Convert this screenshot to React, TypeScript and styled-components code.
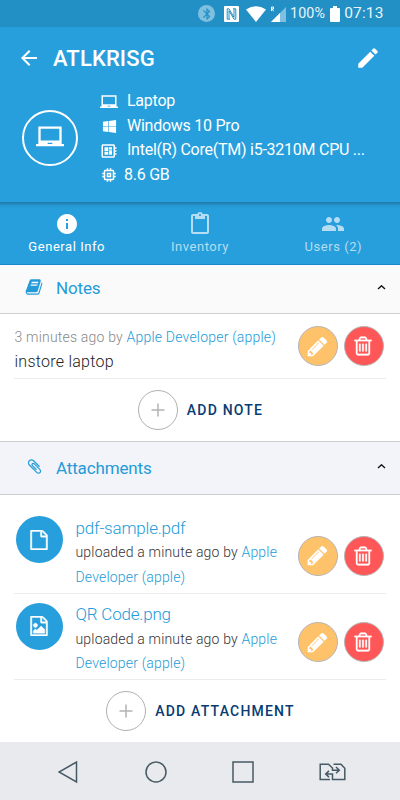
import React from "react";
import styled, { createGlobalStyle } from "styled-components";
import {
  MdArrowBack,
  MdEdit,
  MdLaptopChromebook,
  MdDeveloperBoard,
  MdMemory,
  MdInfo,
  MdContentPaste,
  MdPeople,
  MdBluetooth,
} from "react-icons/md";
import { FaWindows } from "react-icons/fa";

const GlobalStyle = createGlobalStyle`
  *, *::before, *::after { box-sizing: border-box; }
  body { margin: 0; font-family: Roboto, "Liberation Sans", sans-serif; background: #fff; }
  button { font: inherit; border: 0; padding: 0; background: none; }
  svg { display: block; flex: none; }
`;

const Screen = styled.div`
  width: 400px;
  height: 800px;
  display: flex;
  flex-direction: column;
  overflow: hidden;
  background: #fff;
`;

const StatusBar = styled.div`
  height: 27px;
  flex: none;
  display: flex;
  align-items: center;
  padding-left: 198px;
  background: #2390c5;
  color: #e6f4fb;
  font-size: 14px;
`;

const StatusItem = styled.span<{ $gap: number; $size?: number }>`
  margin-left: ${(p) => p.$gap}px;
  font-size: ${(p) => p.$size ?? 14}px;
  letter-spacing: 0.15px;
  line-height: 27px;
`;

const BluetoothBadge = styled.span`
  width: 17px;
  height: 17px;
  display: grid;
  place-items: center;
  border-radius: 50%;
  background: #7fbfe0;
  color: #2390c5;
`;

const Header = styled.header`
  height: 175px;
  flex: none;
  background: #269fdc;
  color: #fff;
`;

const TitleRow = styled.div`
  height: 62px;
  display: flex;
  align-items: center;
  padding: 0 19px 0 17px;
`;

const Title = styled.h1`
  margin: 0 auto 0 12px;
  font-size: 22px;
  font-weight: 500;
  letter-spacing: 0.12px;
`;

const Device = styled.div`
  display: flex;
  padding-left: 22px;
`;

const DeviceAvatar = styled.div`
  width: 56px;
  height: 56px;
  margin-top: 21px;
  padding-bottom: 2px;
  display: grid;
  place-items: center;
  border: 2px solid #fff;
  border-radius: 50%;
`;

const Specs = styled.ul`
  list-style: none;
  margin: -0.500px 0 0 22px;
  padding: 0;
`;

const Spec = styled.li<{ $gap?: number }>`
  height: 24.500px;
  display: flex;
  align-items: center;
  gap: ${(p) => p.$gap ?? 9}px;
  font-size: 16px;
  letter-spacing: -0.250px;
  white-space: nowrap;
`;

const SpecIcon = styled.span`
  width: 18px;
  display: grid;
  place-items: center;
  padding-top: 2px;
`;

const Tabs = styled.nav`
  height: 63px;
  flex: none;
  display: grid;
  grid-template-columns: repeat(3, 1fr);
  background: linear-gradient(#1d7aa9, #2389be 2px, #2599d4 4px, #269fdc 7px);
  border-bottom: 1px solid #168acb;
`;

const Tab = styled.button<{ $active?: boolean }>`
  display: flex;
  flex-direction: column;
  align-items: center;
  padding-top: 10px;
  gap: 1px;
  color: ${(p) => (p.$active ? "#fff" : "#b5ddf3")};
  font-size: 13px;
  line-height: 19px;
  letter-spacing: 0.55px;
`;

const SectionHeader = styled.div<{ $tinted?: boolean }>`
  height: ${(p) => (p.$tinted ? 54 : 49)}px;
  flex: none;
  display: flex;
  align-items: center;
  padding: 0 13px 0 25px;
  background: ${(p) => (p.$tinted ? "#f3f4f9" : "#fafafa")};
  border-top: ${(p) => (p.$tinted ? "1px solid #cfcfd2" : "0")};
  border-bottom: 1px solid #cfcfd2;
  color: #249bd8;
`;

const SectionIcon = styled.span`
  width: 18px;
  display: grid;
  place-items: center;
  margin-top: -4px;
`;

const SectionTitle = styled.h2<{ $lift: number }>`
  margin: -${(p) => p.$lift}px auto 0 13px;
  font-size: 17px;
  line-height: 24px;
  font-weight: 400;
  letter-spacing: -0.150px;
`;

const NoteRow = styled.div`
  height: 65px;
  flex: none;
  margin: 0 14px;
  display: flex;
  justify-content: space-between;
  border-bottom: 1px solid #ececec;
`;

const NoteText = styled.div`
  padding: 11px 0 0 0.500px;
  color: #888;
  font-size: 14px;
  line-height: 24px;
  font-weight: 300;
  letter-spacing: 0.2px;
  white-space: nowrap;
`;

const NoteBody = styled.div`
  padding-top: 1px;
  color: #222;
  font-size: 16px;
  letter-spacing: 0.25px;
`;

const Link = styled.span`
  color: #249bd8;
`;

const Actions = styled.div<{ $top: number }>`
  display: flex;
  gap: 6px;
  padding-top: ${(p) => p.$top}px;
  margin-right: 2px;
`;

const RoundButton = styled.button<{ $color: string }>`
  width: 40px;
  height: 40px;
  padding-right: 2px;
  display: grid;
  place-items: center;
  border: 1px solid #b5b5b5;
  border-radius: 50%;
  background: ${(p) => p.$color};
  color: #fff;
`;

const AddRow = styled.button<{ $height: number }>`
  height: ${(p) => p.$height}px;
  flex: none;
  display: flex;
  align-items: center;
  justify-content: center;
  gap: 9px;
  padding-left: 1px;
  color: #083c72;
  font-size: 14px;
  font-weight: 500;
  letter-spacing: 1.200px;
`;

const PlusCircle = styled.span`
  width: 40px;
  height: 40px;
  display: grid;
  place-items: center;
  border: 1px solid #b0b0b0;
  border-radius: 50%;
`;

const Attachments = styled.div`
  margin: 0 14px;
  padding-top: 12px;
  flex: none;
`;

const Attachment = styled.div`
  height: 86.500px;
  display: flex;
  border-bottom: 1px solid #ececec;
`;

const FileAvatar = styled.div`
  width: 47px;
  height: 47px;
  margin: 9px 13px 0 1.500px;
  display: grid;
  place-items: center;
  flex: none;
  border-radius: 50%;
  background: #269fdc;
  color: #fff;
`;

const FileInfo = styled.div`
  flex: 1;
  padding-top: 8.500px;
  color: #333;
  font-size: 14px;
  line-height: 24.500px;
  font-weight: 300;
  white-space: nowrap;
  letter-spacing: 0.180px;
`;

const FileName = styled.div`
  color: #249bd8;
  font-size: 17px;
  letter-spacing: -0.200px;
`;

const NavBar = styled.div`
  margin-top: auto;
  height: 58px;
  flex: none;
  display: flex;
  justify-content: space-between;
  align-items: center;
  padding: 1px 54px 0 58px;
  background: #e9eaee;
`;

const GLYPHS = {
  book: "M1703 478q40 57 18 129l-275 906q-19 64-76.5 107.5t-122.5 43.5h-923q-77 0-148.5-53.5t-99.5-131.5q-24-67-2-127 0-4 3-27t4-37q1-8-3-21.5t-3-19.5q2-11 8-21t16.5-23.5 16.5-23.5q23-38 45-91.5t30-91.5q3-10 .5-30t-.5-28q3-11 17-28t17-23q21-36 42-92t25-90q1-9-2.5-32t.5-28q4-13 22-30.5t22-22.5q19-26 42.5-84.5t27.5-96.5q1-8-3-25.5t-2-26.5q2-8 9-18t18-23 17-21q8-12 16.5-30.5t15-35 16-36 19.5-32 26.5-23.5 36-11.5 47.5 5.5l-1 3q38-9 51-9h761q74 0 114 56t18 130l-274 906q-36 119-71.5 153.5t-128.5 34.5h-869q-27 0-38 15-11 16-1 43 24 70 144 70h923q29 0 56-15.5t35-41.5l300-987q7-22 5-57 38 15 59 43zm-1064 2q-4 13 2 22.5t20 9.5h608q13 0 25.5-9.5t16.5-22.5l21-64q4-13-2-22.5t-20-9.5h-608q-13 0-25.5 9.5t-16.5 22.5zm-83 256q-4 13 2 22.5t20 9.5h608q13 0 25.5-9.5t16.5-22.5l21-64q4-13-2-22.5t-20-9.5h-608q-13 0-25.5 9.5t-16.5 22.5z",
  clip: "M1596 1385q0 117-79 196t-196 79q-135 0-235-100l-777-776q-113-115-113-271 0-159 110-270t269-111q158 0 273 113l605 606q10 10 10 22 0 16-30.5 46.5t-46.5 30.5q-13 0-23-10l-606-607q-79-77-181-77-106 0-179 75t-73 181q0 105 76 181l776 777q63 63 145 63 64 0 106-42t42-106q0-82-63-145l-581-581q-26-24-60-24-29 0-48 19t-19 48q0 32 25 59l410 410q10 10 10 22 0 16-31 47t-47 31q-12 0-22-10l-410-410q-63-61-63-149 0-82 57-139t139-57q88 0 149 63l581 581q100 98 100 235z",
  pencil: "M491 1536l91-91-235-235-91 91v107h128v128h107zm523-928q0-22-22-22-10 0-17 7l-542 542q-7 7-7 17 0 22 22 22 10 0 17-7l542-542q7-7 7-17zm-54-192l416 416-832 832h-416v-416zm683 96q0 53-37 90l-166 166-416-416 166-165q36-38 90-38 53 0 91 38l235 234q37 39 37 91z",
  trash: "M704 736v576q0 14-9 23t-23 9h-64q-14 0-23-9t-9-23v-576q0-14 9-23t23-9h64q14 0 23 9t9 23zm256 0v576q0 14-9 23t-23 9h-64q-14 0-23-9t-9-23v-576q0-14 9-23t23-9h64q14 0 23 9t9 23zm256 0v576q0 14-9 23t-23 9h-64q-14 0-23-9t-9-23v-576q0-14 9-23t23-9h64q14 0 23 9t9 23zm128 724v-948h-896v948q0 22 7 40.5t14.5 27 10.5 8.5h832q3 0 10.5-8.5t14.5-27 7-40.5zm-672-1076h448l-48-117q-7-9-17-11h-317q-10 2-17 11zm928 32v64q0 14-9 23t-23 9h-96v948q0 83-47 143.5t-113 60.5h-832q-66 0-113-58.5t-47-141.5v-952h-96q-14 0-23-9t-9-23v-64q0-14 9-23t23-9h309l70-167q15-37 54-63t79-26h320q40 0 79 26t54 63l70 167h309q14 0 23 9t9 23z",
  file: "M1596 380q28 28 48 76t20 88v1152q0 40-28 68t-68 28h-1344q-40 0-68-28t-28-68v-1600q0-40 28-68t68-28h896q40 0 88 20t76 48zm-444-244v376h376q-10-29-22-41l-313-313q-12-12-41-22zm384 1528v-1024h-416q-40 0-68-28t-28-68v-416h-768v1536h1280z",
  image:
    "M1596 380q28 28 48 76t20 88v1152q0 40-28 68t-68 28h-1344q-40 0-68-28t-28-68v-1600q0-40 28-68t68-28h896q40 0 88 20t76 48zm-444-244v376h376q-10-29-22-41l-313-313q-12-12-41-22zm384 1528v-1024h-416q-40 0-68-28t-28-68v-416h-768v1536h1280zm-128-448v320h-1024v-192l192-192 128 128 384-384zm-832-192q-80 0-136-56t-56-136 56-136 136-56 136 56 56 136-56 136-136 56z",
};

type GlyphProps = { name: keyof typeof GLYPHS; size: number; weight?: number };

const Glyph = ({ name, size, weight = 0 }: GlyphProps) => (
  <svg width={size} height={size} viewBox="0 0 1792 1792" fill="currentColor" stroke="currentColor" strokeWidth={weight}>
    <path d={GLYPHS[name]} />
  </svg>
);

const Chevron = () => (
  <svg width="12" height="8" viewBox="0 0 12 8" fill="none" stroke="#111" strokeWidth="1.4">
    <path d="M3 4 6.500 .8 10 4" />
  </svg>
);

const Plus = () => (
  <svg width="14" height="14" viewBox="0 0 14 14" stroke="#b3b3b3" strokeWidth="1.5">
    <path d="M7 .5v13M.5 7h13" />
  </svg>
);

const RowActions = ({ top }: { top: number }) => (
  <Actions $top={top}>
    <RoundButton $color="#fec36a" aria-label="Edit">
      <Glyph name="pencil" size={23} />
    </RoundButton>
    <RoundButton $color="#ff5757" aria-label="Delete">
      <Glyph name="trash" size={22} weight={20} />
    </RoundButton>
  </Actions>
);

const FILES: { name: string; icon: "file" | "image" }[] = [
  { name: "pdf-sample.pdf", icon: "file" },
  { name: "QR Code.png", icon: "image" },
];

export default function App() {
  return (
    <>
      <GlobalStyle />
      <Screen>
        <StatusBar>
          <BluetoothBadge>
            <MdBluetooth size={14} />
          </BluetoothBadge>
          <StatusItem $gap={9}>
            <svg width="15" height="16" viewBox="0 0 15 16">
              <rect width="15" height="16" rx="1" fill="#fff" />
              <path
                d="M6 13.200H3.200V2.800H5L10 11.300V3M9 2.800H11.800V13.200H10L5 4.700V13"
                fill="none"
                stroke="#2390c5"
                strokeWidth="1"
              />
            </svg>
          </StatusItem>
          <StatusItem $gap={7}>
            <svg width="20" height="16" viewBox="0 0 20 16" fill="#fff">
              <path d="M0 3.500Q10-3 20 3.500L10 16z" />
            </svg>
          </StatusItem>
          <StatusItem $gap={4}>
            <svg width="17" height="16" viewBox="0 0 17 16">
              <path d="M1 16 16 1v15z" fill="#7fbfe0" />
              <path d="M1 16 10 7v9z" fill="#fff" />
              <path d="M1.500 5V1h2v2h-2l2.300 2" fill="none" stroke="#fff" />
            </svg>
          </StatusItem>
          <StatusItem $gap={3} $size={14.3}>100%</StatusItem>
          <StatusItem $gap={5}>
            <svg width="10" height="16" viewBox="0 0 10 16" fill="#fff">
              <path d="M3 0h4v2h2q1 0 1 1v12q0 1-1 1H1q-1 0-1-1V3q0-1 1-1h2z" />
            </svg>
          </StatusItem>
          <StatusItem $gap={4} $size={15.5}>07:13</StatusItem>
        </StatusBar>

        <Header>
          <TitleRow>
            <MdArrowBack size={24} />
            <Title>ATLKRISG</Title>
            <MdEdit size={26} />
          </TitleRow>
          <Device>
            <DeviceAvatar>
              <MdLaptopChromebook size={28} />
            </DeviceAvatar>
            <Specs>
              <Spec>
                <SpecIcon><MdLaptopChromebook size={18} /></SpecIcon>Laptop
              </Spec>
              <Spec>
                <SpecIcon><FaWindows size={15} /></SpecIcon>Windows 10 Pro
              </Spec>
              <Spec>
                <SpecIcon><MdDeveloperBoard size={18} /></SpecIcon>Intel(R) Core(TM) i5-3210M CPU ...
              </Spec>
              <Spec $gap={6}>
                <SpecIcon><MdMemory size={18} /></SpecIcon>8.6 GB
              </Spec>
            </Specs>
          </Device>
        </Header>

        <Tabs>
          <Tab $active><MdInfo size={24} />General Info</Tab>
          <Tab><MdContentPaste size={24} />Inventory</Tab>
          <Tab><MdPeople size={24} />Users (2)</Tab>
        </Tabs>

        <SectionHeader>
          <SectionIcon><Glyph name="book" size={18} /></SectionIcon>
          <SectionTitle $lift={3}>Notes</SectionTitle>
          <Chevron />
        </SectionHeader>
        <NoteRow>
          <NoteText>
            3 minutes ago by <Link>Apple Developer (apple)</Link>
            <NoteBody>instore laptop</NoteBody>
          </NoteText>
          <RowActions top={12} />
        </NoteRow>
        <AddRow $height={62}>
          <PlusCircle><Plus /></PlusCircle>ADD NOTE
        </AddRow>

        <SectionHeader $tinted>
          <SectionIcon><Glyph name="clip" size={17} /></SectionIcon>
          <SectionTitle $lift={1}>Attachments</SectionTitle>
          <Chevron />
        </SectionHeader>
        <Attachments>
          {FILES.map((file) => (
            <Attachment key={file.name}>
              <FileAvatar><Glyph name={file.icon} size={20} weight={40} /></FileAvatar>
              <FileInfo>
                <FileName>{file.name}</FileName>
                uploaded a minute ago by <Link>Apple</Link>
                <br />
                <Link>Developer (apple)</Link>
              </FileInfo>
              <RowActions top={28.5} />
            </Attachment>
          ))}
        </Attachments>
        <AddRow $height={62}>
          <PlusCircle><Plus /></PlusCircle>ADD ATTACHMENT
        </AddRow>

        <NavBar>
          <svg width="22" height="24" viewBox="0 0 22 24" fill="none" stroke="#455a64" strokeWidth="1.500">
            <path d="M18.500 2v20L1 12z" />
          </svg>
          <svg width="22" height="22" viewBox="0 0 22 22" fill="none" stroke="#455a64" strokeWidth="1.500">
            <circle cx="11" cy="11" r="10" />
          </svg>
          <svg width="23" height="22" viewBox="0 0 23 22" fill="none" stroke="#455a64" strokeWidth="1.500">
            <path d="M2 1h20v20H2z" />
          </svg>
          <svg width="27" height="18" viewBox="0 0 27 18" fill="none" stroke="#455a64" strokeWidth="1.500">
            <path d="M11 16.500H1.200V1.200H9.500L13.500 5V7.200H20M17 4l3.300 3.200L17 10.300M14.500 1.200H22l3.800 4V16.500H13.500V11H7M10 7.900 6.700 11l3.300 3.100" />
          </svg>
        </NavBar>
      </Screen>
    </>
  );
}
